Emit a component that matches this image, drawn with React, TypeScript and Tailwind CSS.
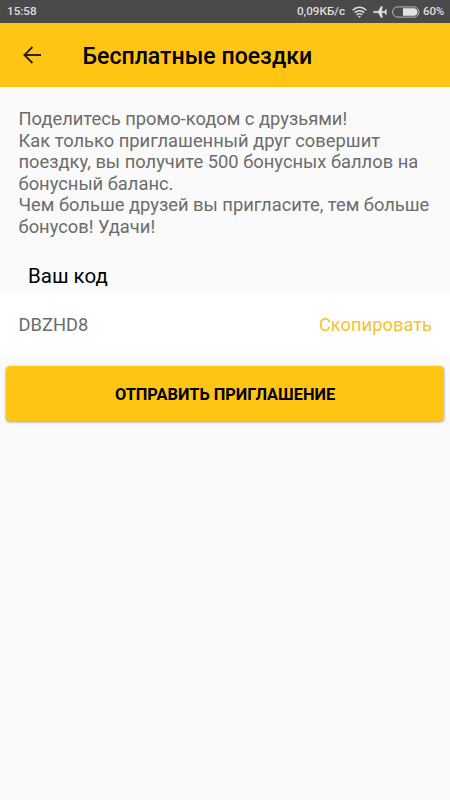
const paragraph = [
  'Поделитесь промо-кодом с друзьями!',
  'Как только приглашенный друг совершит',
  'поездку, вы получите 500 бонусных баллов на',
  'бонусный баланс.',
  'Чем больше друзей вы пригласите, тем больше',
  'бонусов! Удачи!',
];

function WifiIcon() {
  return (
    <svg className="ml-[7px] h-3 w-[15px]" viewBox="0 0 15 12" fill="none" stroke="#dcdcdc" strokeWidth="1.5">
      <path d="M.7 4.2C4.6.4 10.4.4 14.3 4.2" />
      <path d="M2.8 6.6C5.5 4 9.5 4 12.2 6.6" />
      <path d="M4.8 8.9c1.5-1.5 3.9-1.5 5.4 0" />
      <path d="M6 10.2 7.5 11.8 9 10.2C8.1 9.5 6.9 9.5 6 10.2Z" fill="#dcdcdc" stroke="none" />
    </svg>
  );
}

function PlaneIcon() {
  return (
    <svg className="ml-[6px] h-3 w-[14px]" viewBox="0 0 13 12" preserveAspectRatio="none" fill="#e4e4e4" stroke="#e4e4e4" strokeWidth=".35">
      <path d="M.2 6c0-.5.5-.8 1-.8h3.9L7.4.4h1.4L8 5.2h2.9l1-1.6h.8L12.3 6l.4 2.4h-.8l-1-1.6H8l.8 4.8H7.4L5.1 6.8H1.2c-.5 0-1-.3-1-.8Z" />
    </svg>
  );
}

function BatteryIcon() {
  return (
    <svg className="ml-[5px] h-3 w-7" viewBox="0 0 28 12">
      <rect x=".6" y=".9" width="26.4" height="10.2" rx="5.1" fill="none" stroke="#b8b8b8" strokeWidth="1" />
      <path d="M11 2.2h10.7a3.8 3.8 0 0 1 0 7.6H11Z" fill="#e2e2e2" />
    </svg>
  );
}

export default function App() {
  return (
    <main className="flex h-[800px] w-[450px] flex-col overflow-hidden bg-[#fafafa] font-[Roboto,sans-serif]">
      <div className="flex h-[23px] shrink-0 items-center bg-[#4a4a4a] pl-[7px] pr-[6px] pt-px text-[11.7px] font-medium text-[#dfdfdf]">
        <span>15:58</span>
        <span className="ml-auto">0,09КБ/с</span>
        <WifiIcon />
        <PlaneIcon />
        <BatteryIcon />
        <span className="ml-[3px] text-[11.5px] tracking-[-0.2px]">60%</span>
      </div>

      <header className="flex h-16 shrink-0 items-center bg-[#ffc515] pl-[23px]">
        <button aria-label="Назад" className="h-[18px] w-[18px]">
          <svg viewBox="0 0 18 18" fill="none" stroke="#2b2010" strokeWidth="1.8" className="block h-full w-full">
            <path d="M18 9H1.5M9.4 1 1.4 9l8 8" />
          </svg>
        </button>
        <h1 className="ml-[41.5px] mt-[4px] whitespace-nowrap text-[23.1px] font-medium text-black">Бесплатные поездки</h1>
      </header>

      <p className="mt-[21px] whitespace-nowrap pl-[18.5px] text-[18.33px] leading-[21.6px] text-[#6c6c6c]">
        {paragraph.map((line) => (
          <span key={line} className="block">{line}</span>
        ))}
      </p>

      <h2 className="mt-[26px] pl-[28px] text-[20.5px] leading-6 text-black">Ваш код</h2>

      <section className="mt-[5px] flex h-[62px] shrink-0 items-center justify-between bg-white pl-[18.5px] pr-[18px] pt-[3px] text-[18.33px]">
        <span className="text-[#6c6c6c]">DBZHD8</span>
        <button className="text-[#f8c22e]">Скопировать</button>
      </section>

      <button className="mx-[6px] mt-[11.5px] h-[55px] shrink-0 rounded-[4px] bg-[#ffc515] pt-[3px] text-[16.35px] font-bold text-black shadow-[0_1px_3px_rgba(0,0,0,0.4)]">
        ОТПРАВИТЬ ПРИГЛАШЕНИЕ
      </button>
    </main>
  );
}
